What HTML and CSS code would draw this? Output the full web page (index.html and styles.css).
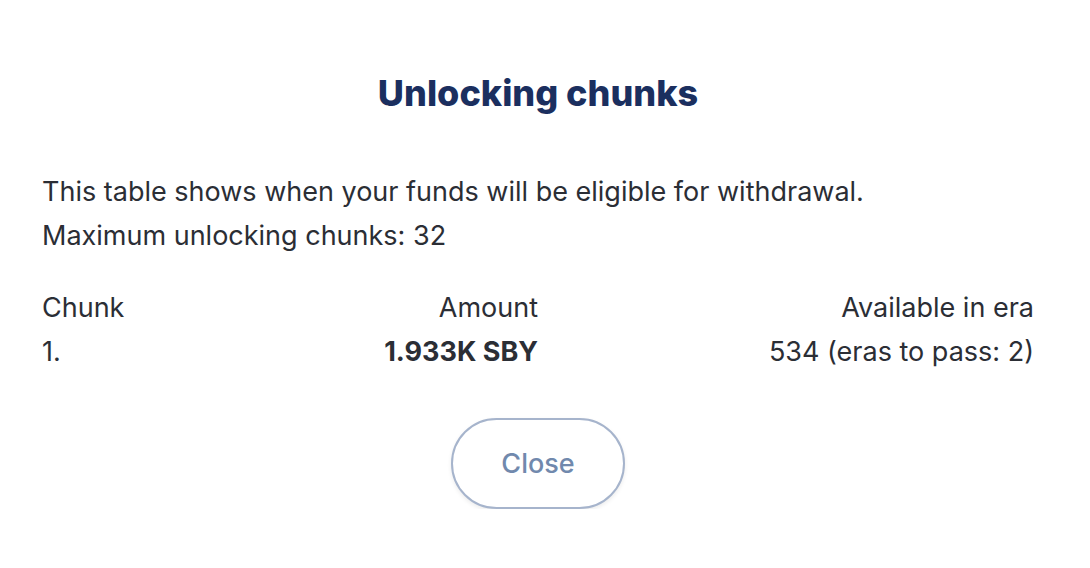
FILE: index.html
```html
<!DOCTYPE html>
<html>
<head>
<meta charset="utf-8">
<link rel="stylesheet" href="styles.css">
</head>
<body>
<div class="modal">
  <h1 class="title">Unlocking chunks</h1>
  <div class="desc">
    <p>This table shows when your funds will be eligible for withdrawal.</p>
    <p>Maximum unlocking chunks: 32</p>
  </div>
  <div class="table">
    <div class="cell">Chunk</div>
    <div class="cell right">Amount</div>
    <div class="cell right">Available in era</div>
    <div class="cell">1.</div>
    <div class="cell right bold">1.933K SBY</div>
    <div class="cell right">534 (eras to pass: 2)</div>
  </div>
  <div class="actions">
    <button class="btn-close">Close</button>
  </div>
</div>
</body>
</html>
```
FILE: styles.css
```css
html, body {
  margin: 0;
  padding: 0;
  background: #ffffff;
}
body {
  font-family: Inter, "Noto Sans", sans-serif;
  color: #2b2e35;
}
.modal {
  padding: 72px 56px 0 42px;
}
.title {
  margin: 0;
  text-align: center;
  font-size: 36px;
  font-weight: 800;
  color: #1b2f5f;
  line-height: 42px;
}
.desc {
  margin-top: 56px;
  font-size: 27px;
  line-height: 44px;
}
.desc p {
  margin: 0;
}
.table {
  margin-top: 28px;
  display: grid;
  grid-template-columns: 1fr 1fr 2fr;
  font-size: 27px;
  line-height: 44px;
}
.right {
  text-align: right;
}
.bold {
  font-weight: 700;
}
.actions {
  margin-top: 44px;
  display: flex;
  justify-content: center;
}
.btn-close {
  width: 174px;
  height: 91px;
  border: 2px solid #a6b4cc;
  border-radius: 46px;
  background: #ffffff;
  color: #7189ad;
  font-family: Inter, "Noto Sans", sans-serif;
  font-size: 27px;
  font-weight: 500;
  box-shadow: 0 2px 4px rgba(0, 0, 0, 0.08);
}
```
